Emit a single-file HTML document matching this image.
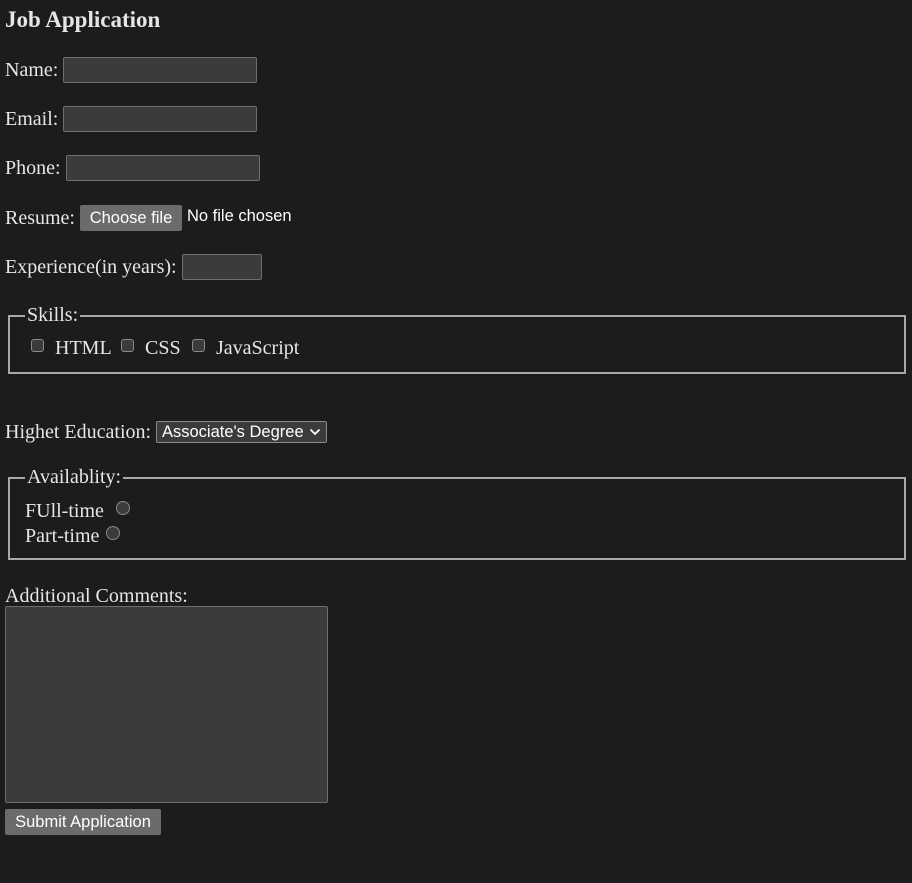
<!DOCTYPE html>
<html><head><style>
html,body{margin:0;padding:0;width:912px;height:883px;overflow:hidden;background:#1b1c1e;color:#e8e6e3;font-family:"Liberation Serif",serif;font-size:20px;}
.a{position:absolute;white-space:nowrap;line-height:1;}
.in{position:absolute;background:#3b3b3b;border:1px solid #6e6e6e;border-radius:2px;box-sizing:border-box;}
.btn{position:absolute;background:#6b6b6b;border-radius:2px;color:#fff;font-family:"Liberation Sans",sans-serif;font-size:16.5px;box-sizing:border-box;text-align:center;line-height:26px;}
.fs{position:absolute;border:2px solid #a8a8a8;box-sizing:border-box;}
.lg{position:absolute;background:#1b1c1e;padding:0 2px;}
.cb{position:absolute;width:13px;height:13px;background:#3b3b3b;border:1px solid #8a8a8a;border-radius:3px;box-sizing:border-box;}
.rd{position:absolute;width:14px;height:14px;background:#3b3b3b;border:1px solid #8a8a8a;border-radius:50%;box-sizing:border-box;}
</style></head><body>
<div class="a" style="left:5px;top:8px;font-weight:bold;font-size:23px;">Job Application</div>

<div class="a" style="left:5px;top:60px;">Name:</div>
<div class="in" style="left:63px;top:57px;width:194px;height:26px;"></div>
<div class="a" style="left:5px;top:109px;">Email:</div>
<div class="in" style="left:63px;top:106px;width:194px;height:26px;"></div>
<div class="a" style="left:5px;top:158px;">Phone:</div>
<div class="in" style="left:66px;top:155px;width:194px;height:26px;"></div>
<div class="a" style="left:5px;top:208px;">Resume:</div>
<div class="btn" style="left:80px;top:205px;width:102px;height:26px;">Choose file</div>
<div class="a" style="left:187px;top:208px;font-family:'Liberation Sans',sans-serif;font-size:16.5px;color:#fff;">No file chosen</div>
<div class="a" style="left:5px;top:257px;">Experience(in years):</div>
<div class="in" style="left:182px;top:254px;width:80px;height:26px;"></div>

<div class="fs" style="left:8px;top:315px;width:898px;height:59px;"></div>
<div class="a lg" style="left:25px;top:305px;">Skills:</div>
<div class="cb" style="left:31px;top:339px;"></div>
<div class="a" style="left:55px;top:338px;">HTML</div>
<div class="cb" style="left:121px;top:339px;"></div>
<div class="a" style="left:145px;top:338px;">CSS</div>
<div class="cb" style="left:192px;top:339px;"></div>
<div class="a" style="left:216px;top:338px;">JavaScript</div>

<div class="a" style="left:5px;top:422px;">Highet Education:</div>
<div class="in" style="left:156px;top:421px;width:171px;height:22px;border-color:#8a8a8a;color:#fff;font-family:'Liberation Sans',sans-serif;font-size:16.5px;line-height:20px;padding-left:5px;">Associate's Degree</div>
<svg style="position:absolute;left:309px;top:428px" width="12" height="8"><path d="M1.5 1.5 L6 6 L10.5 1.5" stroke="#fff" stroke-width="1.8" fill="none"/></svg>

<div class="fs" style="left:8px;top:477px;width:898px;height:83px;"></div>
<div class="a lg" style="left:25px;top:467px;">Availablity:</div>
<div class="a" style="left:25px;top:501px;">FUll-time</div>
<div class="rd" style="left:116px;top:501px;"></div>
<div class="a" style="left:25px;top:526px;">Part-time</div>
<div class="rd" style="left:106px;top:526px;"></div>

<div class="a" style="left:5px;top:586px;">Additional Comments:</div>
<div class="in" style="left:5px;top:606px;width:323px;height:197px;"></div>
<div class="btn" style="left:5px;top:809px;width:156px;height:26px;">Submit Application</div>
</body></html>
